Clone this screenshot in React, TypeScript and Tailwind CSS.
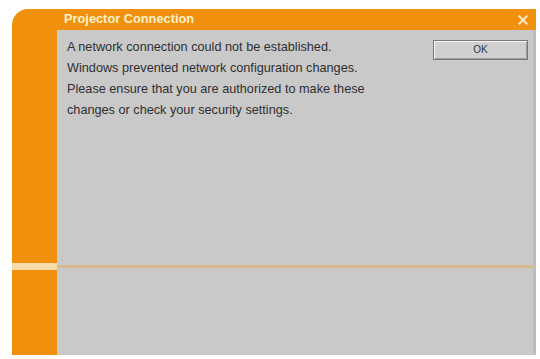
export default function App() {
  return (
    <div className="w-[540px] h-[359px] bg-white pl-[12px] pt-[9px] font-['Liberation_Sans',Arial,sans-serif]">
      <div className="w-[524px] h-[346px] bg-[#f0900c] rounded-tl-[16px] flex flex-col">
        {/* title bar */}
        <div className="h-[21px] flex items-center justify-between pl-[52px] pr-[6px]">
          <span className="text-[12.8px] font-bold text-[#fff1cc] leading-none">Projector Connection</span>
          <svg width="10" height="10" viewBox="0 0 10 10" className="mr-[2px]">
            <path d="M1.5 1.5L8.5 8.5M8.5 1.5L1.5 8.5" stroke="#fbe6c0" strokeWidth="2.2" strokeLinecap="square" />
          </svg>
        </div>

        <div className="flex-1 flex">
          {/* left orange strip */}
          <div className="w-[45px] flex flex-col">
            <div className="flex-1" />
            <div className="h-[7px] bg-[#f7dcab]" />
            <div className="h-[85px]" />
          </div>

          {/* content */}
          <div className="flex-1 flex flex-col bg-[#c9c9c9] border-r-[3px] border-[#bdbdbd]">
            <div className="flex-1 flex justify-between pl-[10px] pr-[5px] pt-[7px]">
              <div className="text-[12.7px] leading-[21px] text-[#2f2f2f]">
                <p>A network connection could not be established.</p>
                <p>Windows prevented network configuration changes.</p>
                <p>Please ensure that you are authorized to make these</p>
                <p>changes or check your security settings.</p>
              </div>
              <button className="mt-[3px] w-[95px] h-[20px] bg-[#d0d0d0] border border-[#7a7a7a] shadow-[inset_1px_1px_0_#f4f4f4,inset_-1px_-1px_0_#9a9a9a] text-[10px] text-[#333] leading-none">
                OK
              </button>
            </div>
            <div className="h-[3px] bg-[#d8b88c]" />
            <div className="h-[87px]" />
          </div>
        </div>
      </div>
    </div>
  )
}
